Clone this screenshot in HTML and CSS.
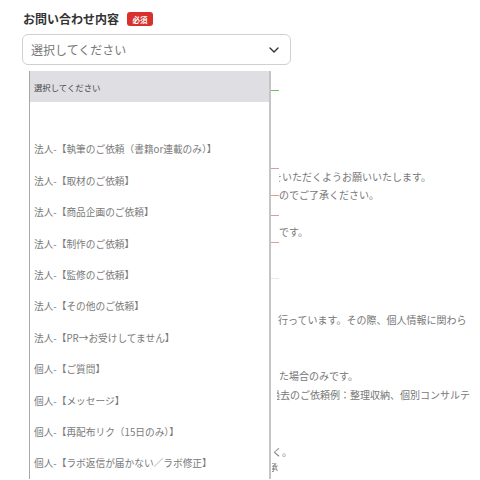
FILE: index.html
```html
<!DOCTYPE html>
<html lang="ja">
<head>
<meta charset="utf-8">
<link rel="stylesheet" href="styles.css">
</head>
<body>
<div class="form">
  <div class="label-row">
    <span class="label">お問い合わせ内容</span>
    <span class="badge">必須</span>
  </div>
  <div class="select-wrap">
    <div class="select">
      <span class="select-text">選択してください</span>
      <svg class="chev" width="10" height="6" viewBox="0 0 10 6"><polyline points="1,1 5,5 9,1" fill="none" stroke="#333" stroke-width="1.4" stroke-linecap="round" stroke-linejoin="round"/></svg>
    </div>
    <ul class="dropdown">
      <li class="opt first">選択してください</li>
      <li class="opt"></li>
      <li class="opt">法人-【執筆のご依頼（書籍or連載のみ）】</li>
      <li class="opt">法人-【取材のご依頼】</li>
      <li class="opt">法人-【商品企画のご依頼】</li>
      <li class="opt">法人-【制作のご依頼】</li>
      <li class="opt">法人-【監修のご依頼】</li>
      <li class="opt">法人-【その他のご依頼】</li>
      <li class="opt">法人-【PR→お受けしてません】</li>
      <li class="opt">個人-【ご質問】</li>
      <li class="opt">個人-【メッセージ】</li>
      <li class="opt">個人-【再配布リク（15日のみ）】</li>
      <li class="opt">個人-【ラボ返信が届かない／ラボ修正】</li>
    </ul>
  </div>
  <div class="behind">
    <div class="row r1"><span class="mark green"></span></div>
    <div class="row r2"><span class="mark red top"></span><span class="txt"><span class="cut">を</span>いただくようお願いいたします。</span></div>
    <div class="row r3"><span class="mark red"></span><span class="txt">のでご了承ください。</span></div>
    <div class="row r4"><span class="mark red"></span></div>
    <div class="row r5"><span class="mark"></span><span class="txt">です。</span></div>
    <div class="row r6"><span class="mark red"></span></div>
    <div class="row r7"><span class="mark gray"></span></div>
    <div class="row r8"><span class="vmark"></span><span class="txt top">行っています。その際、個人情報に関わら</span></div>
    <div class="row r9"><span class="mark"></span><span class="txt">た場合のみです。</span></div>
    <div class="row r10"><span class="mark short"></span><span class="txt"><span class="cut2">過</span>去のご依頼例：整理収納、個別コンサルテ</span></div>
    <div class="row r11"><span class="txt left">く。</span></div>
    <div class="row r12"><span class="txt left small"><span class="cut3">承</span></span></div>
  </div>
</div>
</body>
</html>
```

FILE: styles.css
```css
* { box-sizing: border-box; }
body {
  margin: 0;
  background: #fff;
  font-family: "Noto Sans CJK JP", "Noto Sans", sans-serif;
  color: #333;
  width: 480px;
  height: 480px;
  overflow: hidden;
}
.form {
  padding-top: 11px;
}
.label-row {
  display: flex;
  align-items: center;
  height: 16px;
  padding-left: 23px;
}
.label {
  font-size: 12px;
  font-weight: 700;
  color: #333;
  line-height: 16px;
}
.badge {
  margin-left: 8px;
  width: 26px;
  height: 14px;
  border-radius: 3px;
  background: #d8302d;
  color: #fff;
  font-size: 7.5px;
  font-weight: 700;
  display: flex;
  align-items: center;
  justify-content: center;
}
.select-wrap {
  position: relative;
  margin-top: 7px;
  margin-left: 22px;
  width: 269px;
}
.select {
  height: 31px;
  border: 1px solid #d0d0d0;
  border-radius: 6px;
  display: flex;
  align-items: center;
  justify-content: space-between;
  padding: 0 11px 0 8px;
}
.select-text {
  font-size: 12px;
  color: #777;
}
.chev { display: block; }
.dropdown {
  position: absolute;
  top: 37px;
  left: 7px;
  width: 242px;
  margin: 0;
  padding: 0;
  list-style: none;
  background: #fff;
  border-left: 1px solid #a8a8a8;
  border-right: 2px solid #c4c4c4;
  z-index: 2;
}
.opt {
  height: 31.4px;
  display: flex;
  align-items: center;
  padding-left: 4px;
  font-size: 9.7px;
  color: #7a7a7a;
  white-space: nowrap;
}
.opt.first {
  background: #dedee3;
  color: #444;
  font-size: 8.4px;
}
.behind {
  margin-left: 270px;
  width: 210px;
  overflow: hidden;
  color: #777;
  font-size: 10px;
}
.row {
  display: flex;
  align-items: center;
  white-space: nowrap;
}
.mark {
  flex: none;
  width: 9px;
  height: 1px;
}
.mark.short { width: 7px; }
.mark.top { align-self: flex-start; }
.mark.green { background: #6cc26a; }
.mark.red { background: #e49a9a; }
.mark.gray { background: #e8e8e8; }
.vmark {
  flex: none;
  align-self: flex-start;
  width: 1px;
  height: 22px;
  margin-top: 9px;
  margin-right: 7px;
  background: #e6b4b4;
}
.txt {
  line-height: 18px;
  overflow: hidden;
  min-width: 0;
}
.txt.top { align-self: flex-start; }
.cut { display: inline-block; margin-left: -7px; }
.cut2 { display: inline-block; margin-left: -7px; }
.cut3 { display: inline-block; margin-left: -3px; }
.txt.left { margin-left: 2px; }
.txt.small { font-size: 9px; }
.r1 { height: 50px; }
.r2 { height: 17px; margin-top: 53px; }
.r3 { height: 20px; }
.r4 { height: 20px; }
.r5 { height: 14px; }
.r6 { height: 6px; }
.r7 { height: 66px; }
.r8 { height: 31px; }
.r9 { height: 18px; margin-top: 25px; }
.r10 { height: 20px; }
.r11 { height: 18px; margin-top: 38px; }
.r12 { height: 14px; }
```
